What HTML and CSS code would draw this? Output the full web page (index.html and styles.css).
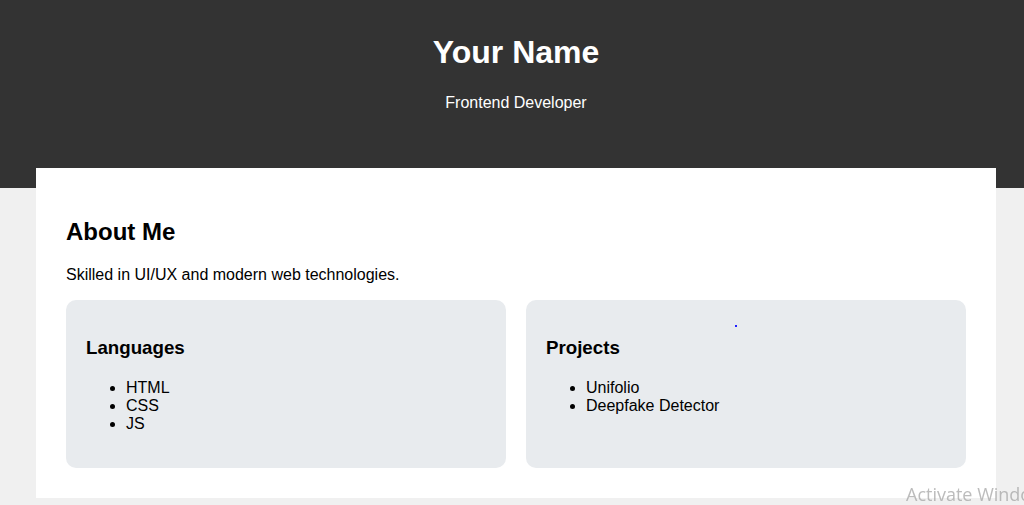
FILE: index.html
```html
<!DOCTYPE html>
<html lang="en">
<head>
<meta charset="utf-8">
<title>Your Name - Portfolio</title>
<link rel="stylesheet" href="styles.css">
</head>
<body>
<header class="site-header">
  <h1 class="name">Your Name</h1>
  <p class="role">Frontend Developer</p>
</header>
<main class="container">
  <h2 class="section-title">About Me</h2>
  <p class="intro">Skilled in UI/UX and modern web technologies.</p>
  <div class="cards">
    <section class="card">
      <h3 class="card-title">Languages</h3>
      <ul class="card-list">
        <li>HTML</li>
        <li>CSS</li>
        <li>JS</li>
      </ul>
    </section>
    <section class="card">
      <h3 class="card-title">Projects</h3>
      <ul class="card-list">
        <li>Unifolio</li>
        <li>Deepfake Detector</li>
      </ul>
      <span class="cursor-dot"></span>
    </section>
  </div>
</main>
<div class="watermark">Activate Windows</div>
</body>
</html>
```

FILE: styles.css
```css
html, body {
  margin: 0;
  padding: 0;
}

body {
  background: #f0f0f0;
  font-family: "Liberation Sans", Arial, sans-serif;
  color: #000;
  overflow: hidden;
  height: 505px;
}

.site-header {
  background: #333333;
  color: #fff;
  text-align: center;
  height: 188px;
  box-sizing: border-box;
  padding: 34px 0 0 8px;
}

.name {
  margin: 0;
  font-size: 32px;
  line-height: 37px;
  font-weight: bold;
}

.role {
  margin: 23px 0 0;
  font-size: 16px;
  line-height: 18px;
}

.container {
  background: #fff;
  margin: -20px 28px 0 36px;
  padding: 30px;
}

.section-title {
  font-size: 24px;
  margin: 20px 0 20px;
  line-height: 28px;
}

.intro {
  font-size: 16px;
  margin: 0 0 16px;
  line-height: 18px;
}

.cards {
  display: grid;
  grid-template-columns: 1fr 1fr;
  gap: 20px;
}

.card {
  position: relative;
  background: #e8ebee;
  border-radius: 10px;
  padding: 18px 20px 20px;
  height: 168px;
  box-sizing: border-box;
}

.card-title {
  font-size: 18.72px;
  line-height: 21px;
  margin: 19px 0 21px;
}

.card-list {
  margin: 0;
  padding-left: 40px;
  font-size: 16px;
  line-height: 18px;
}

.cursor-dot {
  position: absolute;
  left: 209px;
  top: 25px;
  width: 2px;
  height: 2px;
  background: #2020ff;
}

.watermark {
  position: fixed;
  left: 906px;
  top: 482px;
  font-family: "Open Sans", "Noto Sans", sans-serif;
  font-size: 18px;
  color: rgba(160, 160, 160, 0.7);
  white-space: nowrap;
}
```
